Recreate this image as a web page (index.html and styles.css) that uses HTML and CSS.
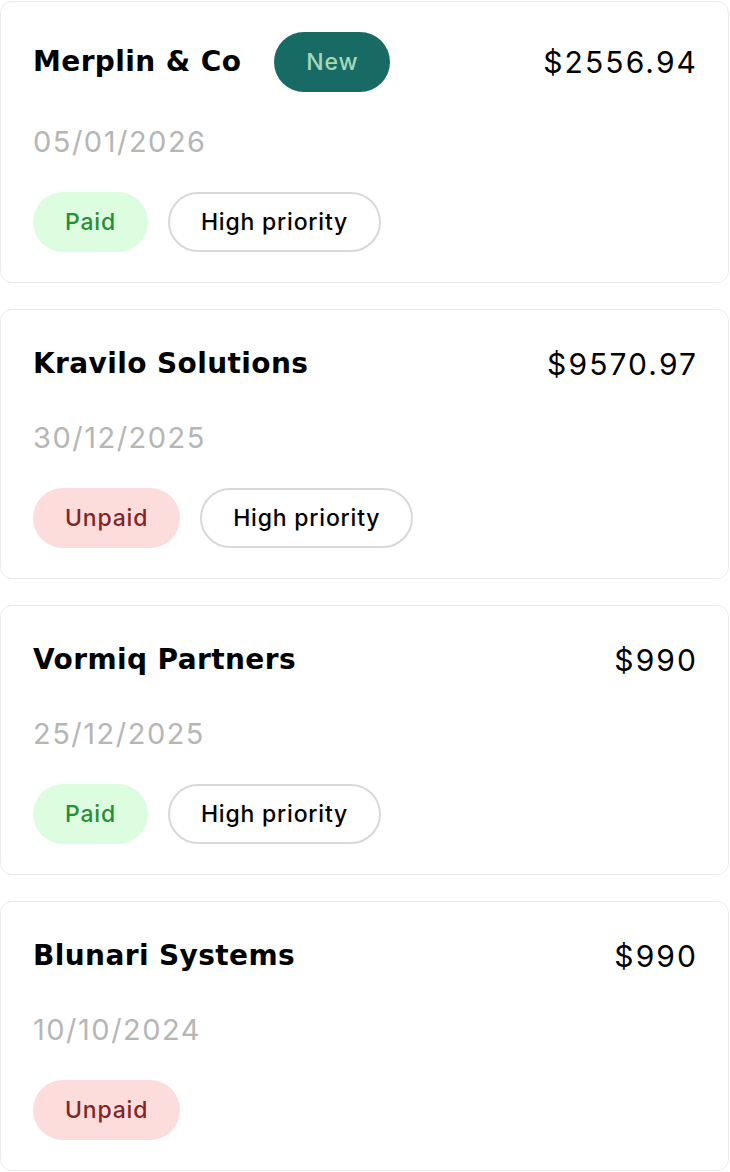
FILE: index.html
```html
<!DOCTYPE html>
<html lang="en">
<head>
<meta charset="utf-8">
<title>Invoices</title>
<link rel="stylesheet" href="styles.css">
</head>
<body>
<main class="list">
  <article class="card">
    <div class="row">
      <div class="title-group">
        <h2 class="title">Merplin &amp; Co</h2>
        <span class="pill pill-new">New</span>
      </div>
      <span class="amount">$2556.94</span>
    </div>
    <div class="date">05/01/2026</div>
    <div class="tags">
      <span class="pill pill-paid">Paid</span>
      <span class="pill pill-outline">High priority</span>
    </div>
  </article>
  <article class="card">
    <div class="row">
      <div class="title-group">
        <h2 class="title">Kravilo Solutions</h2>
      </div>
      <span class="amount">$9570.97</span>
    </div>
    <div class="date">30/12/2025</div>
    <div class="tags">
      <span class="pill pill-unpaid">Unpaid</span>
      <span class="pill pill-outline">High priority</span>
    </div>
  </article>
  <article class="card">
    <div class="row">
      <div class="title-group">
        <h2 class="title">Vormiq Partners</h2>
      </div>
      <span class="amount">$990</span>
    </div>
    <div class="date">25/12/2025</div>
    <div class="tags">
      <span class="pill pill-paid">Paid</span>
      <span class="pill pill-outline">High priority</span>
    </div>
  </article>
  <article class="card">
    <div class="row">
      <div class="title-group">
        <h2 class="title">Blunari Systems</h2>
      </div>
      <span class="amount">$990</span>
    </div>
    <div class="date">10/10/2024</div>
    <div class="tags">
      <span class="pill pill-unpaid">Unpaid</span>
    </div>
  </article>
</main>
</body>
</html>
```
FILE: styles.css
```css
* { box-sizing: border-box; }
html, body { margin: 0; padding: 0; background: #ffffff; }
body { font-family: Inter, "Liberation Sans", sans-serif; color: #000; }

.list {
  display: flex;
  flex-direction: column;
  gap: 26px;
  padding: 1px 1px 0 0;
}

.card {
  border: 1px solid #ebebeb;
  border-radius: 12px;
  padding: 30px 32px;
  display: flex;
  flex-direction: column;
  gap: 32px;
  background: #fff;
}

.row {
  display: flex;
  align-items: center;
  justify-content: space-between;
  min-height: 48px;
}

.title-group {
  display: flex;
  align-items: center;
  gap: 33px;
}

.title {
  margin: 0;
  font-family: "DejaVu Sans", Inter, sans-serif;
  font-weight: 700;
  font-size: 28px;
  line-height: 48px;
  letter-spacing: 0.4px;
}

.amount {
  font-size: 30px;
  line-height: 48px;
  font-weight: 400;
  letter-spacing: 2.1px;
  margin-right: -2.1px;
}

.date {
  font-size: 29px;
  line-height: 36px;
  color: #b6b6b6;
  letter-spacing: 1.5px;
}

.tags {
  display: flex;
  gap: 20px;
}

.pill {
  display: inline-flex;
  align-items: center;
  justify-content: center;
  height: 60px;
  padding: 0 32px;
  border-radius: 30px;
  font-size: 23px;
  font-weight: 500;
  letter-spacing: 0.8px;
  white-space: nowrap;
}

.pill-new {
  background: #186b65;
  color: #a3d9b9;
  padding: 0 32px;
}

.pill-paid {
  background: #dcfde0;
  color: #2a8c36;
}

.pill-unpaid {
  background: #fddcdc;
  color: #7f2626;
}

.pill-outline {
  border: 2px solid #d9d9d9;
  color: #000;
  padding: 0 31px;
}
```
